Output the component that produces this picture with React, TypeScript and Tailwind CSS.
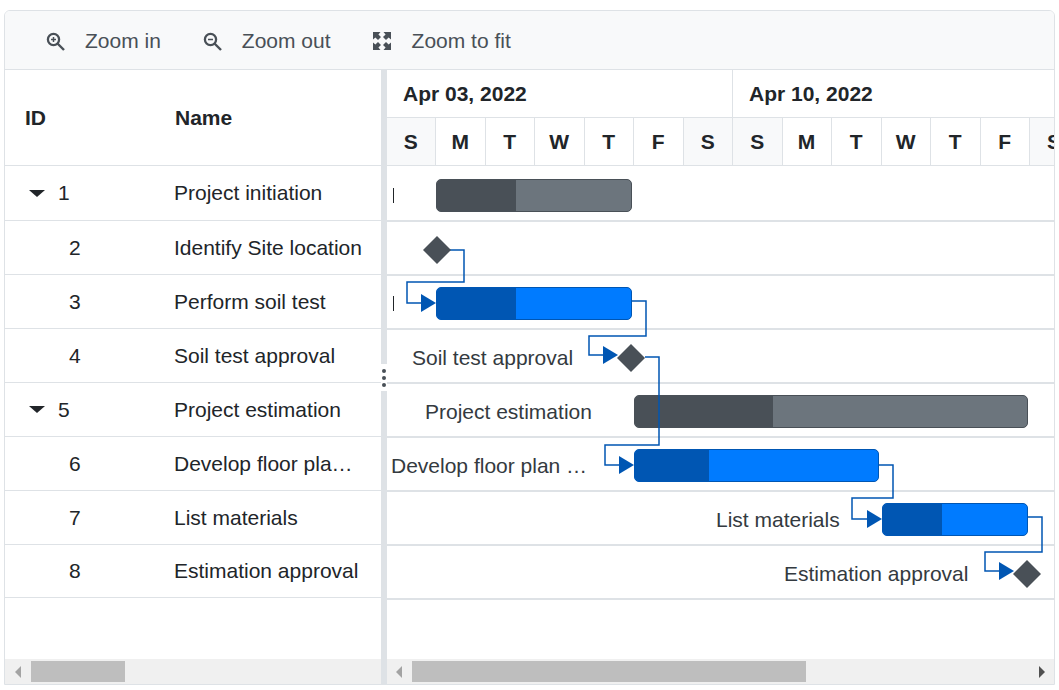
import { ReactNode } from "react";

const rows = [
  { id: 1, name: "Project initiation", parent: true },
  { id: 2, name: "Identify Site location" },
  { id: 3, name: "Perform soil test" },
  { id: 4, name: "Soil test approval" },
  { id: 5, name: "Project estimation", parent: true },
  { id: 6, name: "Develop floor plan for estimation" },
  { id: 7, name: "List materials" },
  { id: 8, name: "Estimation approval" },
];

const week = ["S", "M", "T", "W", "T", "F", "S"];

// positions on the chart canvas
const bars = [
  { left: 49, top: 13, width: 196, progress: 79, summary: true },
  { left: 49, top: 121, width: 196, progress: 79 },
  { left: 247, top: 229, width: 394, progress: 138, summary: true },
  { left: 247, top: 283, width: 245, progress: 74 },
  { left: 495, top: 337, width: 146, progress: 59 },
];

const labels = [
  { left: 25, top: 180, text: "Soil test approval" },
  { left: 38, top: 234, text: "Project estimation" },
  { left: 4, top: 288, text: "Develop floor plan …" },
  { left: 329, top: 342, text: "List materials" },
  { left: 397, top: 396, text: "Estimation approval" },
];

const connectors = [
  "63,84 77,84 77,116 20,116 20,137 34,137",
  "245,135 259,135 259,170 202,170 202,189 216,189",
  "258,191 272,191 272,279 218,279 218,299 232,299",
  "492,299 506,299 506,332 465,332 465,353 480,353",
  "641,351 655,351 655,386 598,386 598,405 612,405",
];

const arrows = [
  "34,128 49,137 34,146",
  "216,180 231,189 216,198",
  "232,290 247,299 232,308",
  "480,344 495,353 480,362",
  "612,396 627,405 612,414",
];

const diamonds = [
  [50, 84],
  [244, 192],
  [640, 408],
];

const ToolButton = ({ icon, label }: { icon: ReactNode; label: string }) => (
  <button className="flex items-center gap-[19px] text-[#495057]">
    {icon}
    <span>{label}</span>
  </button>
);

const ZoomIcon = ({ plus }: { plus?: boolean }) => (
  <svg width="20" height="20" viewBox="0 0 20 20" fill="none" stroke="#495057">
    <circle cx="7.5" cy="8.5" r="5.6" strokeWidth="2.3" />
    <path d="M11.5 12.5 L18 19" strokeWidth="2.4" />
    <path d={plus ? "M5 8.5h5M7.5 6v5" : "M5 8.5h5"} strokeWidth="1.5" />
  </svg>
);

const FitIcon = () => (
  <svg width="20" height="20" viewBox="1 0 20 20" fill="#495057">
    <path d="M1 1h7.5L6.4 3.4 9 6 6 9 3.4 6.4 1 8.5z" />
    <path d="M19 1v7.5L16.6 6.4 14 9 11 6 13.6 3.4 11.5 1z" />
    <path d="M1 19v-7.5L3.4 13.6 6 11 9 14 6.4 16.6 8.5 19z" />
    <path d="M19 19h-7.5L13.6 16.6 11 14 14 11 16.6 13.6 19 11.5z" />
  </svg>
);

const ScrollBar = ({
  arrowLeft,
  thumbWidth,
  rightArrow,
}: {
  arrowLeft: string;
  thumbWidth: string;
  rightArrow?: boolean;
}) => (
  <div className="flex h-[25px] items-center bg-[#f0f0f0]">
    <span className={`h-0 w-0 border-y-[6px] border-r-[6px] border-y-transparent border-r-[#a3a3a3] ${arrowLeft}`} />
    <div className={`ml-[10px] h-[21px] bg-[#bebebe] ${thumbWidth}`} />
    {rightArrow && (
      <span className="ml-auto mr-[9px] h-0 w-0 border-y-[6px] border-l-[6px] border-y-transparent border-l-[#505050]" />
    )}
  </div>
);

const App = () => {
  return (
    <div className="pl-[4px] pt-[10px] font-['Liberation_Sans',Arial,sans-serif] text-[21px] text-[#212529]">
      <div className="w-[1051px] overflow-hidden rounded-t-[6px] border border-[#dee2e6]">
        <div className="flex h-[59px] items-center gap-[42px] border-b border-[#dee2e6] bg-[#f8f9fa] pl-[41px] pt-[1px]">
          <ToolButton icon={<ZoomIcon plus />} label="Zoom in" />
          <ToolButton icon={<ZoomIcon />} label="Zoom out" />
          <ToolButton icon={<FitIcon />} label="Zoom to fit" />
        </div>
        <div className="flex h-[614px]">
          <div className="flex w-[376px] flex-col">
            <div className="flex h-[96px] items-center border-b border-[#dee2e6] font-bold">
              <div className="w-[170px] pl-[20px]">ID</div>
              <div>Name</div>
            </div>
            <div className="flex-1">
              {rows.map((row) => (
                <div
                  key={row.id}
                  className="flex h-[54px] items-center border-b border-[#dee2e6] first:h-[55px] last:h-[53px]"
                >
                  <div className="flex w-[169px] items-center">
                    {row.parent ? (
                      <>
                        <span className="ml-[24px] h-0 w-0 border-x-[8px] border-t-[7px] border-x-transparent border-t-[#212529]" />
                        <span className="ml-[13px]">{row.id}</span>
                      </>
                    ) : (
                      <span className="ml-[64px]">{row.id}</span>
                    )}
                  </div>
                  <div className="w-[188px] truncate">{row.name}</div>
                </div>
              ))}
            </div>
            <ScrollBar arrowLeft="ml-[10px]" thumbWidth="w-[94px]" />
          </div>
          <div className="relative w-[6px] bg-[#dee2e6]">
            <div className="absolute left-0 top-[294px] flex h-[27px] w-full flex-col items-center justify-center gap-[3px] bg-white">
              <span className="h-[4px] w-[4px] rounded-full bg-[#495057]" />
              <span className="h-[4px] w-[4px] rounded-full bg-[#495057]" />
              <span className="h-[4px] w-[4px] rounded-full bg-[#495057]" />
            </div>
          </div>
          <div className="flex min-w-0 flex-1 flex-col overflow-hidden">
            <div className="flex h-[48px] shrink-0 items-center border-b border-[#dee2e6] font-bold">
              <div className="flex h-full w-[346px] shrink-0 items-center border-r border-[#dee2e6] pl-[16px]">
                Apr 03, 2022
              </div>
              <div className="pl-[16px]">Apr 10, 2022</div>
            </div>
            <div className="flex h-[48px] shrink-0 border-b border-[#dee2e6] font-bold">
              {[0, 1].map((w) => (
                <div key={w} className="grid w-[346.4px] shrink-0 grid-cols-7">
                  {week.map((day, i) => (
                    <div
                      key={i}
                      className={`flex items-center justify-center border-r border-[#dee2e6] pr-[1px] ${
                        i === 0 || i === 6 ? "bg-[#f8f9fa]" : ""
                      }`}
                    >
                      {day}
                    </div>
                  ))}
                </div>
              ))}
            </div>
            <div className="relative flex-1 text-[#343a40]">
              {rows.map((row) => (
                <div
                  key={row.id}
                  className="h-[54px] border-b-2 border-[#dee2e6] first:h-[56px]"
                />
              ))}
              {bars.map((bar) => (
                <div
                  key={bar.top}
                  className={`absolute flex h-[33px] overflow-hidden rounded-[5px] border ${
                    bar.summary
                      ? "border-[#495057] bg-[#6c757d]"
                      : "border-[#0056b3] bg-[#007bff]"
                  }`}
                  style={{ left: bar.left, top: bar.top, width: bar.width }}
                >
                  <div
                    className={bar.summary ? "bg-[#495057]" : "bg-[#0056b3]"}
                    style={{ width: bar.progress }}
                  />
                </div>
              ))}
              {labels.map((label) => (
                <span
                  key={label.text}
                  className="absolute whitespace-nowrap leading-[24px]"
                  style={{ left: label.left, top: label.top }}
                >
                  {label.text}
                </span>
              ))}
              <span className="absolute left-[6px] top-[22px] h-[15px] w-px bg-[#212529]" />
              <span className="absolute left-[6px] top-[130px] h-[15px] w-px bg-[#212529]" />
              <svg
                className="absolute left-0 top-0"
                width="666"
                height="440"
                fill="none"
              >
                {connectors.map((points) => (
                  <polyline
                    key={points}
                    points={points}
                    stroke="#0056b3"
                    strokeWidth="1.5"
                  />
                ))}
                {arrows.map((points) => (
                  <polygon key={points} points={points} fill="#0056b3" />
                ))}
                {diamonds.map(([x, y]) => (
                  <polygon
                    key={x}
                    points={`${x},${y - 14} ${x + 14},${y} ${x},${y + 14} ${x - 14},${y}`}
                    fill="#495057"
                  />
                ))}
              </svg>
            </div>
            <ScrollBar arrowLeft="ml-[9px]" thumbWidth="w-[394px]" rightArrow />
          </div>
        </div>
      </div>
    </div>
  );
};

export default App;
